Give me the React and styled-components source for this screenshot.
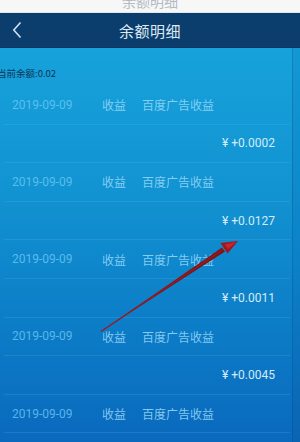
import React from 'react';
import styled, { createGlobalStyle } from 'styled-components';

const GlobalStyle = createGlobalStyle`
  html, body {
    margin: 0;
    padding: 0;
    background: #fff;
  }
  body {
    font-family: "Noto Sans CJK SC", "Roboto", "Noto Sans", sans-serif;
  }
`

const Screen = styled.div`
  position: relative;
  width: 300px;
  height: 442px;
  overflow: hidden;
  display: flex;
  flex-direction: column;
`

const StatusBar = styled.div`
  flex-shrink: 0;
  height: 13px;
  background: #f7f7f8;
  display: flex;
  justify-content: center;
  align-items: flex-end;
  overflow: hidden;
  border-bottom: 1px solid #dfe6ee;
  box-sizing: border-box;
`

const StatusTitle = styled.span`
  font-size: 14px;
  line-height: 14px;
  margin-bottom: 4px;
  color: #b3bac2;
`

const NavBar = styled.div`
  flex-shrink: 0;
  height: 34px;
  background: #0b3e6c;
  display: flex;
  align-items: center;
  position: relative;
  border-bottom: 1px solid #0a3560;
`

const Back = styled.div`
  width: 40px;
  display: flex;
  align-items: center;
  padding-left: 12px;
  position: relative;
  z-index: 1;
`

const NavTitle = styled.div`
  position: absolute;
  left: 0;
  right: 0;
  text-align: center;
  color: #dde9f4;
  font-size: 15px;
  letter-spacing: 0.5px;
`

const Body = styled.div`
  flex: 1;
  min-height: 0;
  overflow: hidden;
  display: flex;
  background: linear-gradient(180deg, #17a2db 0%, #1294d2 35%, #0c7dc7 70%, #0a69bd 100%);
`

const Content = styled.div`
  flex: 1;
  display: flex;
  flex-direction: column;
`

const Edge = styled.div`
  width: 7px;
  background: linear-gradient(180deg, #1398d4 0%, #0b84c9 50%, #0a64b4 100%);
  border-left: 1px solid rgba(10, 60, 120, 0.25);
`

const Balance = styled.div`
  margin: 18px 0 0 -3px;
  height: 14px;
  font-size: 9.5px;
  line-height: 14px;
  color: #0b3558;
`

const List = styled.div`
  margin-top: 6px;
  padding: 0 2px 0 4px;
`

const Row = styled.div`
  flex-shrink: 0;
  height: 37.6px;
  display: flex;
  align-items: center;
  justify-content: ${p => (p.$amount ? 'flex-end' : 'flex-start')};
  padding: ${p => (p.$amount ? '0 15px 0 0' : '0 0 0 8px')};
  border-bottom: 1px solid rgba(120, 200, 240, 0.16);
  font-size: 12px;
  font-family: "Roboto", "Noto Sans CJK SC", sans-serif;
`

const Date = styled.span`
  width: 90px;
  color: rgba(110, 200, 245, 0.8);
`

const Kind = styled.span`
  width: 40px;
  color: rgba(150, 215, 248, 0.88);
`

const Desc = styled.span`
  color: rgba(150, 215, 248, 0.88);
`

const Amount = styled.span`
  color: #d3ebf8;
  font-size: 12px;
`

const Arrow = styled.svg`
  position: absolute;
  left: 0;
  top: 0;
  pointer-events: none;
`

const records = [
  { date: '2019-09-09', kind: '收益', desc: '百度广告收益', amount: '0.0002' },
  { date: '2019-09-09', kind: '收益', desc: '百度广告收益', amount: '0.0127' },
  { date: '2019-09-09', kind: '收益', desc: '百度广告收益', amount: '0.0011' },
  { date: '2019-09-09', kind: '收益', desc: '百度广告收益', amount: '0.0045' },
  { date: '2019-09-09', kind: '收益', desc: '百度广告收益' },
];

export default function App() {
  return (
    <>
      <GlobalStyle />
      <Screen>
        <StatusBar>
          <StatusTitle>余额明细</StatusTitle>
        </StatusBar>
        <NavBar>
          <Back>
            <svg width="10" height="18" viewBox="0 0 10 18">
              <path d="M8.5 1.5 L1.8 9 L8.5 16.5" fill="none" stroke="#cfe0f0" strokeWidth="1.6" />
            </svg>
          </Back>
          <NavTitle>余额明细</NavTitle>
        </NavBar>
        <Body>
          <Content>
            <Balance>当前余额:0.02</Balance>
            <List>
              {records.map((r, i) => (
                <React.Fragment key={i}>
                  <Row>
                    <Date>{r.date}</Date>
                    <Kind>{r.kind}</Kind>
                    <Desc>{r.desc}</Desc>
                  </Row>
                  {r.amount && (
                    <Row $amount>
                      <Amount>¥ +{r.amount}</Amount>
                    </Row>
                  )}
                </React.Fragment>
              ))}
            </List>
          </Content>
          <Edge />
        </Body>
        <Arrow width="300" height="442" viewBox="0 0 300 442">
          <path d="M100 332 L222 247.5 L225 251.5 Z" fill="#7a1418" />
          <path d="M101 331.5 L223 249.5" stroke="#9a1c22" strokeWidth="1.4" />
          <path d="M238 241 L220.5 243 L227.5 253.5 Z" fill="#a3161d" />
          <path d="M236 242 L225 244.5 L228 249 Z" fill="#c62830" />
        </Arrow>
      </Screen>
    </>
  );
}
